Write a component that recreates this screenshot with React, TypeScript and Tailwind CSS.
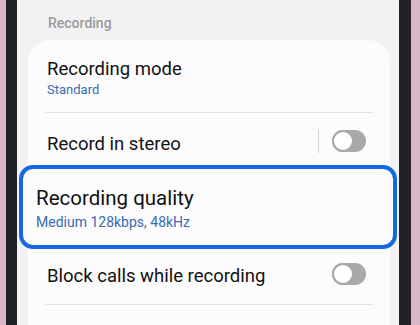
function Toggle() {
  return (
    <div className="relative w-[34px] h-[22px] rounded-full bg-[#a9a9a9]">
      <div className="absolute left-0 top-0 w-[22px] h-[22px] rounded-full bg-white border-2 border-[#a9a9a9]" />
    </div>
  );
}

function Divider() {
  return <div className="mx-[17px] h-px bg-[#e3e3e5]" />;
}

export default function App() {
  return (
    <div
      className="w-[420px] h-[325px] flex overflow-hidden bg-[#d9b8c9]"
      style={{ fontFamily: "Roboto, 'Noto Sans', sans-serif" }}
    >
      {/* phone bezel left */}
      <div className="w-[6px] bg-[#d8b6c8]" />
      <div className="w-[11px] bg-[#222224]" />

      {/* screen */}
      <div className="flex-1 flex flex-col bg-[#f2f2f4]">
        <div className="h-[40px] pl-[31px] pt-[14px] text-[14px] leading-[18px] font-medium text-[#9b9b9d]">
          Recording
        </div>

        <div className="ml-[11px] mr-[9px] flex-1 flex flex-col rounded-t-[22px] bg-[#fcfcfd]">
          {/* Recording mode */}
          <div className="h-[72px] pl-[19px] pt-[17px] flex flex-col">
            <span className="text-[18.5px] leading-[24px] text-[#111]">Recording mode</span>
            <span className="text-[13px] leading-[18px] text-[#3a6ab4]">Standard</span>
          </div>
          <Divider />

          {/* Record in stereo */}
          <div className="h-[52px] pl-[19px] pr-[24px] pt-[19px] flex items-start justify-between">
            <span className="text-[18.5px] leading-[24px] text-[#111]">Record in stereo</span>
            <div className="flex items-center gap-[13px] -mt-[3px]">
              <div className="w-px h-[24px] bg-[#d4d4d6]" />
              <Toggle />
            </div>
          </div>

          {/* Recording quality (highlighted) */}
          <div className="-ml-[9px] -mr-[7px] h-[84px] rounded-[14px] border-[4px] border-[#1569e0] bg-[#fcfcfd] pl-[13px] pt-[16px] flex flex-col">
            <span className="text-[20.5px] leading-[26px] text-[#111]">Recording quality</span>
            <span className="mt-[2px] text-[14px] leading-[18px] text-[#3a6ab4]">Medium 128kbps, 48kHz</span>
          </div>

          {/* Block calls while recording */}
          <div className="h-[55px] pl-[19px] pr-[24px] pt-[15px] flex items-start justify-between">
            <span className="text-[18.5px] leading-[24px] text-[#111]">Block calls while recording</span>
            <div className="-mt-px">
              <Toggle />
            </div>
          </div>
          <Divider />
        </div>
      </div>

      {/* phone bezel right */}
      <div className="w-[12px] bg-[#222224]" />
      <div className="w-[9px] bg-[#d8b6c8]" />
    </div>
  );
}
